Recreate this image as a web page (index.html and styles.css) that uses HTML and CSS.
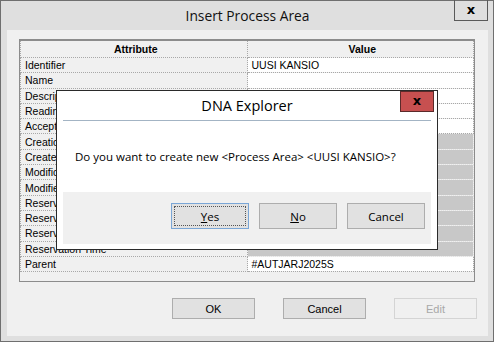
FILE: index.html
```html
<!DOCTYPE html>
<html>
  <head>
    <meta charset="utf-8">
    <title>Insert Process Area</title>
    <link rel="stylesheet" href="styles.css">
  </head>
  <body>
    <div class="window">
      <div class="titlebar">
        <span class="title">Insert Process Area</span>
        <div class="close">x</div>
      </div>

      <div class="client">
        <div class="grid">
          <table>
            <tr class="head"><th>Attribute</th><th>Value</th></tr>
            <tr><td class="attr">Identifier</td><td>UUSI KANSIO</td></tr>
            <tr><td class="attr">Name</td><td></td></tr>
            <tr><td class="attr">Description</td><td></td></tr>
            <tr><td class="attr">Reading Rights</td><td></td></tr>
            <tr><td class="attr">Acceptor</td><td></td></tr>
            <tr><td class="attr">Creation Time</td><td class="ro"></td></tr>
            <tr><td class="attr">Created By</td><td class="ro"></td></tr>
            <tr><td class="attr">Modification Time</td><td class="ro"></td></tr>
            <tr><td class="attr">Modified By</td><td class="ro"></td></tr>
            <tr><td class="attr">Reserved</td><td class="ro"></td></tr>
            <tr><td class="attr">Reserved By</td><td class="ro"></td></tr>
            <tr><td class="attr">Reservation</td><td class="ro"></td></tr>
            <tr><td class="attr">Reservation Time</td><td class="ro"></td></tr>
            <tr><td class="attr">Parent</td><td>#AUTJARJ2025S</td></tr>
          </table>
        </div>

        <div class="actions">
          <button class="btn">OK</button>
          <button class="btn">Cancel</button>
          <button class="btn disabled">Edit</button>
        </div>
      </div>

      <!-- message box on top of the dialog -->
      <div class="msgbox">
        <div class="msg-title">DNA Explorer</div>
        <div class="msg-close">x</div>
        <div class="msg-rule"></div>
        <div class="msg-text">Do you want to create new &lt;Process Area&gt; &lt;UUSI KANSIO&gt;?</div>
        <div class="msg-buttons">
          <button class="mbtn focus"><span class="focusring"><u>Y</u>es</span></button>
          <button class="mbtn"><u>N</u>o</button>
          <button class="mbtn">Cancel</button>
        </div>
      </div>
    </div>
  </body>
</html>
```

FILE: styles.css
```css
body {
  margin: 0;
  padding: 0;
  background: #f0f0f0;
}

.window {
  position: relative;
  width: 494px;
  height: 342px;
  box-sizing: border-box;
  border: 1px solid #6f6f6f;
  background: #dfdfdf;
  padding: 0 5px 5px 6px;
  font-family: "Liberation Sans", Arial, sans-serif;
}

.titlebar {
  position: relative;
  height: 29px;
  text-align: center;
}

.title {
  font-family: "Open Sans", "Noto Sans", sans-serif;
  font-size: 13.8px;
  line-height: 30px;
  color: #111;
}

.close {
  position: absolute;
  top: -1px;
  right: 0;
  width: 32px;
  height: 20px;
  border: 1px solid #5a5a5a;
  border-top: none;
  box-sizing: content-box;
  font-family: "DejaVu Sans", sans-serif;
  font-weight: bold;
  font-size: 13px;
  line-height: 19px;
  text-align: center;
  color: #000;
}

.client {
  background: #f0f0f0;
  height: 306px;
  padding: 9px 0 0 12px;
  box-sizing: border-box;
}

.grid {
  width: 456px;
  height: 243px;
  box-sizing: border-box;
  border: 1px solid #8c8c8c;
  border-top: 2px solid #8c8c8c;
  background: #f0f0f0;
}

.grid table {
  width: 100%;
  border-collapse: collapse;
  table-layout: fixed;
  font-size: 10.5px;
  color: #000;
}

.grid th,
.grid td {
  border: 1px dotted #a8a8a8;
  padding: 0 0 0 4px;
  height: 14.3px;
  line-height: 14px;
  white-space: nowrap;
  overflow: hidden;
  text-align: left;
}

.grid th {
  height: 16px;
  font-weight: bold;
  text-align: center;
  background: #f0f0f0;
}

.grid tr:first-child th {
  border-top: none;
}

.grid td {
  background: #fff;
}

.grid td.attr {
  background: #f0f0f0;
}

.grid td.ro {
  background: #c8c8c8;
  border-color: #e4e4e4;
}

.actions {
  display: flex;
  justify-content: flex-end;
  gap: 28px;
  margin-top: 16px;
  padding-right: 11px;
}

.btn {
  width: 83px;
  height: 21px;
  box-sizing: border-box;
  border: 1px solid #adadad;
  background: #e1e1e1;
  font-family: "Liberation Sans", Arial, sans-serif;
  font-size: 11px;
  color: #000;
  padding: 0;
}

.btn.disabled {
  border-color: #d4d4d4;
  background: #f0f0f0;
  color: #a8a8a8;
}

/* DNA Explorer message box */
.msgbox {
  position: absolute;
  left: 55px;
  top: 89px;
  width: 382px;
  height: 160px;
  box-sizing: border-box;
  border: 1px solid #2a2a2a;
  background: #fff;
  padding: 0 6px 5px 6px;
  display: flex;
  flex-direction: column;
}

.msg-title {
  height: 29px;
  text-align: center;
  font-family: "Open Sans", "Noto Sans", sans-serif;
  font-size: 14.5px;
  line-height: 29px;
  color: #000;
}

.msg-close {
  position: absolute;
  top: 0;
  right: 3px;
  width: 32px;
  height: 19px;
  border: 1px solid #5b2a2a;
  background: #c75050;
  font-family: "DejaVu Sans", sans-serif;
  font-weight: bold;
  font-size: 13px;
  line-height: 18px;
  text-align: center;
  color: #000;
}

.msg-rule {
  height: 1px;
  background: #a3b4c4;
}

.msg-text {
  flex: 1;
  padding: 28px 0 0 12px;
  font-family: "Open Sans", "Noto Sans", sans-serif;
  font-size: 11.5px;
  color: #000;
}

.msg-buttons {
  display: flex;
  justify-content: flex-end;
  gap: 10px;
  height: 52px;
  box-sizing: border-box;
  padding: 11px 6px 0 0;
  background: #f0f0f0;
}

.mbtn {
  width: 78px;
  height: 26px;
  box-sizing: border-box;
  border: 1px solid #adadad;
  background: #e1e1e1;
  font-family: "Open Sans", "Noto Sans", sans-serif;
  font-size: 11.5px;
  color: #000;
  padding: 0;
}

.mbtn u {
  text-decoration: underline;
}

.mbtn.focus {
  border-color: #7aa6d6;
  padding: 2px;
}

.focusring {
  display: block;
  height: 100%;
  box-sizing: border-box;
  border: 1px dotted #555;
  line-height: 19px;
}
```
